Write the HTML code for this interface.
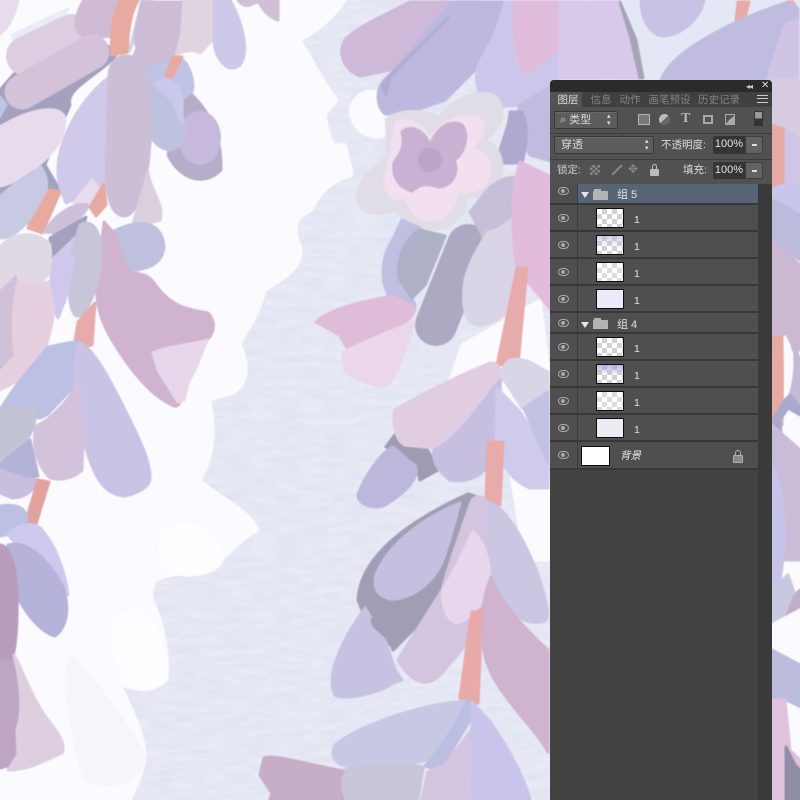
<!DOCTYPE html>
<html><head><meta charset="utf-8">
<style>
*{box-sizing:border-box}
html,body{margin:0;padding:0;width:800px;height:800px;overflow:hidden;background:#e7e9f4}
#art{position:absolute;left:0;top:0}
#art path{fill:currentColor;stroke:currentColor;stroke-width:3;stroke-linejoin:round}
#p{position:absolute;left:550px;top:80px;width:222px;height:720px;background:#424242;border-radius:4px 4px 0 0;overflow:hidden;font-family:"Liberation Sans","Noto Sans CJK SC",sans-serif;color:#d8d8d8;font-size:11px;filter:blur(.35px)}
#p div{position:absolute}
.tab{top:13px;height:14px;line-height:14px;font-size:10.5px;color:#858585;text-align:center;white-space:nowrap}
.tb{background:#5c5c5c;border:1px solid #383838;border-radius:2px;box-shadow:inset 0 1px 0 #6a6a6a}
.inp{background:#353535;color:#e2e2e2;font-size:11px;line-height:17px;text-align:center;border-radius:2px 0 0 2px}
.btn{background:#626262;border:1px solid #3d3d3d;border-radius:0 2px 2px 0}
.btn:after{content:"";position:absolute;left:6px;top:7px;width:5px;height:2px;background:#ddd}
.row{left:0;width:208px;height:27px;background:#4f4f4f;border-bottom:2px solid #383838}
.row .sep{left:27px;top:0;width:1px;height:100%;background:#3b3b3b}
.eye{left:8px;top:9px;width:11px;height:8px;border:1.5px solid #a8a8a8;border-radius:50%/60%}
.eye:after{content:"";position:absolute;left:2px;top:1px;width:4px;height:4px;border-radius:50%;background:#a8a8a8}
.th{left:46px;top:3px;width:28px;height:20px;border:1px solid #0c0c0c;background-color:#fff;background-image:conic-gradient(#d2d2d2 25%,#fff 25% 50%,#d2d2d2 50% 75%,#fff 75%);background-size:10px 10px}
.n{left:84px;top:8px;line-height:14px;color:#e0e0e0;font-size:10.5px}
.tri{left:31px;top:7px;width:0;height:0;border-left:4px solid transparent;border-right:4px solid transparent;border-top:6px solid #e6e6e6}
.fo{left:43px;top:6px;width:15px;height:9px;background:#b4b4b4;border-radius:1px 1px 0 0}
.fo:before{content:"";position:absolute;left:1px;top:-2px;width:7px;height:3px;background:#b4b4b4}
</style></head><body>
<svg id="art" width="800" height="800" viewBox="0 0 800 800">
<defs>
<filter id="tex" x="0" y="0" width="100%" height="100%"><feTurbulence type="fractalNoise" baseFrequency="0.04 0.16" numOctaves="4" seed="4"/><feColorMatrix values="0 0 0 0 .6 0 0 0 0 .64 0 0 0 0 .8 1.2 0 0 0 -.38"/></filter>
<filter id="sb"><feGaussianBlur stdDeviation="0.5"/></filter>
</defs>
<rect width="800" height="800" fill="#e8eaf5"/>
<rect width="800" height="800" filter="url(#tex)" opacity=".45"/>
<g filter="url(#sb)">
<!-- white background blobs -->
<path color="#fbfaff" d="M0 0H345C335 15 320 30 300 40C315 65 325 85 337 100L325 115C330 150 345 165 352 175C335 180 320 190 312 210C300 215 290 225 300 245C305 265 290 275 265 290C258 320 245 330 240 345C255 375 240 395 225 395L210 400C215 430 215 455 200 480C215 495 250 510 258 530C230 545 222 570 190 572C160 578 150 575 152 600C165 625 170 665 166 680C155 690 135 690 120 685C130 705 146 735 145 760C140 780 135 790 130 800H0Z"/>
<path color="#fdfcff" d="M165 530C190 515 220 530 222 560C218 575 185 578 168 572C158 560 158 545 165 530ZM113 625C120 610 145 605 152 620C160 640 170 665 166 680C150 695 130 690 122 680C118 665 110 640 113 625Z"/>
<path color="#f5f5fb" d="M70 655C95 680 125 720 145 755 140 785 110 790 85 780 72 740 65 700 70 655Z"/>
<path color="#fbfaff" d="M350 110C355 90 375 85 385 100L392 130C378 145 352 135 350 110ZM305 145L345 145 352 172 322 190 300 175Z"/>
<path color="#e9ecf6" d="M12 35L68 9 60 22 15 43Z"/>
<path color="#fbfaff" d="M462 345L540 300 550 380 510 470 525 560 550 560V480L430 440Z"/>
<path color="#fbfaff" d="M772 220L800 220V800H772Z"/>
<!-- LEFT CLUSTER -->
<path color="#e8dcec" d="M0 0H18C15 15 8 28 0 34Z"/>
<path color="#a3a1bd" d="M0 90L14 74 108 46 116 55C100 75 65 88 70 105 60 130 50 150 45 165L60 190 35 230 0 195Z"/>
<line x1="26" y1="56" x2="72" y2="34" stroke="#dccde0" stroke-width="40" stroke-linecap="round"/>
<path color="#cfbcd4" d="M84 0H128L122 36 92 37C82 37 76 32 76 26 76 15 80 6 84 0Z"/>
<path color="#bfc4e6" d="M0 97L6 105 0 116Z"/>
<line x1="22" y1="92" x2="92" y2="52" stroke="#d3c2d8" stroke-width="35" stroke-linecap="round"/>
<path color="#e7aaa0" d="M120 0H138C130 15 127 35 128 52L112 55C110 35 113 15 120 0Z"/>
<path color="#c9d4e6" d="M142 0H152L138 30 130 50Z"/>
<path color="#bfc3e4" d="M145 30L175 55C188 60 193 75 193 88 190 100 182 107 178 110L150 120 132 60Z"/>
<path color="#b7adc9" d="M192 95C208 110 222 135 221 170 205 187 180 180 168 155L176 108Z"/>
<ellipse cx="200" cy="138" rx="21" ry="27" fill="#c7b9db"/>
<ellipse cx="163" cy="118" rx="21" ry="34" fill="#bfc2de" transform="rotate(-18 163 118)"/>
<path color="#c9c9ec" d="M155 85C165 75 178 80 182 100V122L172 100Z"/>
<path color="#e7aaa0" d="M172 58L182 57 172 77 166 76Z"/>
<path color="#cdbcd5" d="M142 2H182L181 45C170 55 160 65 152 65 140 62 134 50 136 30Z"/>
<path color="#e0d4e0" d="M184 0H218C226 15 224 30 214 38L200 53C192 48 182 52 177 54L182 30Z"/>
<path color="#cdc8e8" d="M214 0H230C246 30 248 55 240 65 226 76 214 55 214 40Z"/>
<path color="#d0bfd6" d="M238 0H262L250 5C245 7 240 3 238 0ZM258 0H278V20C270 18 262 10 258 0Z"/>
<path color="#e8dbee" d="M0 127C25 112 58 102 65 118 65 145 45 160 30 172 15 182 5 185 0 186Z"/>
<path color="#d0c9ea" d="M109 77V180L88 193 66 203C56 180 56 165 62 145 72 115 90 92 109 77Z"/>
<path color="#e8dcee" d="M74 203L92 180 104 196 85 210Z"/>
<path color="#c8c9e3" d="M0 197C15 182 33 172 41 167 49 180 50 195 35 215 15 235 10 238 0 238Z"/>
<path color="#e7aaa0" d="M50 190L60 192 42 233 28 228Z"/>
<path color="#cfbfd8" d="M45 232C55 212 78 202 87 205 90 212 68 226 55 233Z"/>
<path color="#e7aaa0" d="M90 207L104 184 106 205 96 216Z"/>
<path color="#cbbfd8" d="M109 75C110 52 135 50 145 68 152 95 152 130 148 165 142 195 135 215 125 216 110 216 105 195 107 150Z"/>
<path color="#dacfdd" d="M148 172C150 190 165 205 160 220 145 224 135 226 133 224Z"/>
<path color="#a3a1bd" d="M50 238L86 217 78 250 52 258Z"/>
<path color="#d0c9ea" d="M52 260L78 235 80 270 50 295Z"/>
<path color="#bfc0de" d="M112 232C135 220 160 218 164 245 164 262 150 270 130 270Z"/>
<path color="#cfb3cf" d="M104 222L115 234C122 255 125 268 130 272 150 275 150 278 158 288 175 310 195 310 208 313 216 322 215 332 207 340 195 345 170 350 150 352L180 402C178 407 174 407 172 405 150 395 130 370 112 340 100 320 95 300 97 280Z"/>
<path color="#e8d6ea" d="M153 353C170 345 195 345 207 340L195 370 188 383 184 400 178 402 158 370Z"/>
<path color="#c8c4da" d="M80 225C95 217 104 235 100 270 95 295 85 318 76 316 68 310 68 280 70 260Z"/>
<path color="#cfc8ec" d="M52 265C55 257 65 257 74 257L65 300 58 318 50 300Z"/>
<path color="#e0d8e2" d="M0 247C15 230 40 232 50 245 52 270 50 283 30 283L10 298 0 298Z"/>
<path color="#e6cfde" d="M18 282C30 285 40 285 48 282L54 310C50 340 40 370 28 375L0 390V340Z"/>
<path color="#cfc2d8" d="M0 292L16 277C8 310 10 340 12 355L0 368Z"/>
<path color="#e7abab" d="M78 322L95 303 92 345 74 348Z"/>
<path color="#bcc0e2" d="M0 410C15 385 25 375 48 347 60 345 75 340 80 343L80 380 48 414 40 418Z"/>
<path color="#c9c4e6" d="M80 343C95 350 110 380 125 410 140 440 150 460 150 478 150 488 135 494 125 496 105 495 95 480 85 445 75 410 70 370 80 343Z"/>
<path color="#d3c2dc" d="M78 382L83 440 82 470C75 478 60 481 50 478 40 468 31 450 36 426 50 420 70 400 78 382Z"/>
<path color="#c3c3d6" d="M0 412C15 405 30 405 35 410 37 430 25 445 10 455L0 460Z"/>
<path color="#b3b3d5" d="M0 464L30 440 38 476 20 479 0 468Z"/>
<path color="#c8bedd" d="M0 470L25 478 37 480C35 490 25 498 12 498L0 493Z"/>
<path color="#e2a39e" d="M38 480L49 482 36 524 25 524Z"/>
<!-- lower left -->
<path color="#bcc0e2" d="M0 506C12 504 25 505 27 518 25 528 18 533 0 536Z"/>
<path color="#cfc8ee" d="M8 535C15 525 35 520 42 530 55 545 65 570 68 595L50 580Z"/>
<path color="#b5b3da" d="M8 545C25 540 45 555 62 585 72 610 65 630 55 636 40 632 22 610 15 590Z"/>
<path color="#ba9dbd" d="M0 545C8 545 15 560 17 590 18 630 15 650 12 660L0 660Z"/>
<path color="#bea5c6" d="M0 662H14C25 690 22 720 17 730 19 750 20 755 12 765L0 768Z"/>
<path color="#ddcfe0" d="M14 655C25 675 30 695 48 720 60 735 66 745 62 753 45 760 30 770 8 770L18 755 17 730C24 710 20 680 14 655Z"/>
<!-- CENTER TOP CLUSTER -->
<path color="#cfb9d9" d="M410 2H452L440 40 390 70 360 76C345 70 337 55 345 40 355 28 385 15 410 2Z"/>
<path color="#bcb8de" d="M452 2H508L490 55 445 100 405 114 385 114C375 105 375 85 390 75Z"/>
<path color="#b0acd2" d="M382 85L448 18 390 76 386 95Z"/>
<path color="#cbc7ea" d="M505 2H558V80L520 105 490 107C478 100 474 80 478 65 490 45 500 25 505 2Z"/>
<path color="#e0bcdc" d="M514 2H558V50L534 70 522 72C515 45 512 20 514 2Z"/>
<path color="#c0bce0" d="M520 105L558 82V163L530 155C520 140 515 120 520 105Z"/>
<path color="#aea9cd" d="M510 112L522 112C530 130 525 150 522 163L497 163C500 145 510 125 510 112Z"/>
<!-- flower -->
<path color="#e0dde6" d="M385 120C400 108 428 110 440 118 450 100 480 88 495 96 510 112 497 132 485 141 500 145 505 165 500 180 490 195 472 197 465 198 468 215 450 230 430 229 412 228 400 215 395 210 375 218 355 212 357 195 360 175 378 165 386 158 382 135 385 120Z"/>
<path color="#f2e0f0" d="M397 122C410 117 424 126 430 138 440 122 465 112 480 119 488 130 476 145 470 150 488 150 495 168 485 184 475 194 465 192 455 191 460 208 440 223 425 220 412 215 410 205 405 196 395 203 382 195 386 176 392 157 392 135 397 122Z"/>
<path color="#c8b1d2" d="M402 132C410 124 425 130 430 146 436 128 450 119 462 125 470 135 464 155 454 160 460 175 450 187 438 187 425 183 420 184 412 191 400 188 392 178 394 163 398 155 406 150 402 132Z"/>
<ellipse cx="430" cy="160" rx="12" ry="12" fill="#bda4c5"/>
<!-- below flower -->
<path color="#bfbfe2" d="M402 220L420 228 400 270 415 305 414 310 395 304C380 290 380 260 390 245Z"/>
<path color="#aeb0c8" d="M420 230L445 236 425 285 412 298 400 280C395 265 402 240 420 230Z"/>
<line x1="468" y1="245" x2="436" y2="325" stroke="#aea9c2" stroke-width="42" stroke-linecap="round"/>
<path color="#c7bfd9" d="M470 212C480 200 485 192 490 187 505 177 523 167 521 200 520 225 500 240 485 240Z"/>
<path color="#d9d4e6" d="M488 232C510 228 530 205 522 182L550 180 535 240 515 300C505 320 480 330 470 322 462 310 463 295 465 280 470 260 480 245 488 232Z"/>
<path color="#e2bcdc" d="M520 162L558 180V318L518 270C510 235 512 190 520 162Z"/>
<path color="#e7abab" d="M517 268L527 268 518 365 497 365Z"/>
<!-- pink flower leaves -->
<path color="#dfbdd8" d="M316 322C330 308 370 300 392 296L415 308C412 322 400 325 385 330L358 350C350 353 345 348 340 335Z"/>
<path color="#ead8ea" d="M343 353C355 345 395 330 414 322 410 335 402 365 388 385 378 390 355 378 345 372Z"/>
<!-- mid leaves -->
<path color="#9e9bb3" d="M400 428C410 430 415 440 425 445L438 470 420 480 416 465 400 450 386 447Z"/>
<path color="#bcb8dc" d="M358 495C365 475 380 455 392 447 400 450 405 460 415 465 420 475 410 490 385 505 375 510 358 505 358 495Z"/>
<path color="#e0cde2" d="M395 410C420 395 460 375 490 363 500 362 502 375 502 380L465 445 435 448 405 445C395 440 392 420 395 410Z"/>
<path color="#c7bfe0" d="M434 450C455 442 480 405 500 380L501 420 485 470C475 480 460 482 450 480 437 470 432 460 434 450Z"/>
<path color="#cfcbeb" d="M497 388L520 412 548 455V488L530 488C510 480 496 460 496 430Z"/>
<path color="#d9d4e6" d="M501 375C505 357 515 357 530 362L548 372V390L522 408Z"/>
<path color="#c2c2e2" d="M524 408L548 392V463Z"/>
<path color="#e7abab" d="M488 442L503 442 500 505 486 500Z"/>
<!-- large leaf -->
<path color="#a09db5" d="M358 600C360 560 400 525 468 494L475 496 440 600 395 648 370 630Z"/>
<path color="#c5c0df" d="M376 575C390 540 430 515 460 503 455 520 445 560 438 570 425 590 405 600 390 599 378 595 373 590 376 575Z"/>
<path color="#c6c2e2" d="M365 608L385 640 395 670 402 680 395 682C375 695 345 700 335 695 327 680 335 650 365 608Z"/>
<path color="#a09db5" d="M372 620C390 605 420 598 430 587L447 567 425 618 393 650C388 632 372 630 372 620Z"/>
<path color="#d3c4e0" d="M442 590C450 560 465 520 472 500 480 492 490 498 490 520L500 580 470 640 440 675C425 690 410 680 398 660Z"/>
<path color="#e8a9a9" d="M472 610L482 610 478 703 460 698Z"/>
<path color="#cbc7e2" d="M487 502C505 505 525 540 540 580 548 610 552 622 540 622 520 625 497 605 492 570 488 540 484 512 487 502Z"/>
<path color="#e8d6ec" d="M473 532C480 537 490 555 490 580 488 600 470 620 457 623 447 620 441 605 443 590 455 570 465 548 473 532Z"/>
<path color="#cfb3cf" d="M491 577C500 600 520 625 548 650V752C530 720 490 690 484 650 480 620 482 600 491 577Z"/>
<path color="#e8a9a9" d="M472 612L481 612 478 703 460 698Z"/>
<!-- bottom -->
<path color="#c6c8e4" d="M335 745C360 725 420 704 468 701L440 750C430 765 400 765 365 765 340 770 328 760 335 745Z"/>
<path color="#bcbee2" d="M468 700L473 715 440 770 425 766C440 750 458 722 468 700Z"/>
<path color="#c9c5ea" d="M472 702L490 722C510 750 525 780 530 800H468L472 750Z"/>
<path color="#d3c4e0" d="M470 732L468 800H422L428 772 445 765Z"/>
<path color="#c8c6d8" d="M345 770C360 764 410 764 423 767L418 800H345C341 790 339 775 345 770Z"/>
<path color="#c7aec8" d="M264 758C275 754 310 765 343 771 338 780 340 790 343 800H270L272 793 260 775Z"/>
<!-- TOP RIGHT -->
<path color="#e4e8f5" d="M620 0H800V80H642Z"/>
<path color="#c8c3e4" d="M641 0H704C700 20 680 36 662 36 650 34 641 20 641 0Z"/>
<path color="#d8c8ea" d="M560 78V2H618L632 35 640 78Z"/>
<path color="#a8a4b8" d="M620 2L636 40 643 78 640 78 630 35Z"/>
<path color="#e7aaa5" d="M738 2H749L745 18 736 20ZM787 2H793L798 10H789Z"/>
<path color="#bfbce0" d="M661 80C670 55 720 25 785 3 798 5 798 8 798 15V80Z"/>
<path color="#cfc4e4" d="M767 80L785 25 798 20V80Z"/>
<!-- RIGHT EDGE -->
<path color="#d7cbe2" d="M772 80H800V140L772 130Z"/>
<path color="#e7aaa5" d="M772 125L786 130 786 185 772 190Z"/>
<path color="#cfc5e4" d="M786 130L800 140V190H786Z"/>
<path color="#c8c6ea" d="M772 190C785 182 795 185 800 190V240H772Z"/>
<path color="#bcbbdc" d="M772 200L800 215V260L772 240Z"/>
<path color="#cbb9d3" d="M772 240L800 265V350H772Z"/>
<path color="#e7aaa5" d="M773 337H783L782 425H773Z"/>
<path color="#fbfaff" d="M785 337C795 355 795 380 790 395L798 405V423L786 410Z"/>
<path color="#c5bad5" d="M792 340L800 360V405L790 395C795 380 797 355 792 340Z"/>
<path color="#a9a9ce" d="M785 400L790 395 800 407V415L788 408 780 420 782 445 800 450 773 430 773 420Z"/>
<path color="#c9bcd8" d="M772 425L800 450V560H772Z"/>
<path color="#c8c3e8" d="M772 465C785 490 787 540 780 580L772 590Z"/>
<path color="#c8c9e0" d="M772 590L788 575 795 595 785 620 772 625Z"/>
<path color="#c2aecb" d="M795 595L800 590V625L785 620Z"/>
<path color="#fbfaff" d="M772 625L800 610V665L772 650Z"/>
<path color="#bcbcdc" d="M772 650L800 665V720H772Z"/>
<path color="#fbfaff" d="M780 700L800 710V760L785 745Z"/>
<path color="#dfc3de" d="M772 700H785L790 750 800 760V800H772Z"/>
<path color="#8f8da5" d="M786 747L795 765 800 770V800H786Z"/>
</g>
</svg>
<div id="p">
<div style="left:0;top:0;width:222px;height:12px;background:#2b2b2b"></div>
<div style="left:196px;top:2px;font-size:8px;color:#ccc;letter-spacing:-1px">◂◂</div>
<div style="left:211px;top:0;font-size:10px;color:#ddd;line-height:12px">✕</div>
<div style="left:0;top:12px;width:222px;height:15px;background:#404040"></div>
<div style="left:0;top:12px;width:32px;height:15px;background:#535353"></div>
<div class="tab" style="left:7px;width:22px;color:#dedede">图层</div>
<div class="tab" style="left:40px;width:22px">信息</div>
<div class="tab" style="left:69px;width:22px">动作</div>
<div class="tab" style="left:98px;width:43px">画笔预设</div>
<div class="tab" style="left:148px;width:38px">历史记录</div>
<div style="left:207px;top:15px;width:11px;height:8px;border-top:1px solid #ccc;border-bottom:1px solid #ccc"></div>
<div style="left:207px;top:18px;width:11px;height:1px;background:#ccc"></div>
<!-- toolbar -->
<div style="left:0;top:27px;width:222px;height:27px;background:#515151;border-bottom:1px solid #3b3b3b"></div>
<div class="tb" style="left:4px;top:31px;width:64px;height:18px"></div>
<div style="left:10px;top:33px;font-size:11px;line-height:14px;color:#ddd">⌕ 类型</div>
<div style="left:57px;top:33px;font-size:7px;line-height:7px;color:#ddd">▴<br>▾</div>
<div style="left:88px;top:34px;width:12px;height:11px;border:1px solid #b5b5b5;background:#777"></div>
<div style="left:109px;top:34px;width:11px;height:11px;border-radius:50%;background:linear-gradient(135deg,#bbb 50%,#666 50%)"></div>
<div style="left:131px;top:31px;font-family:'Liberation Serif',serif;font-size:14px;font-weight:bold;line-height:16px;color:#b8b8b8">T</div>
<div style="left:153px;top:35px;width:10px;height:9px;border:2px solid #a8a8a8"></div>
<div style="left:175px;top:34px;width:10px;height:11px;border:1px solid #aaa;background:linear-gradient(135deg,#555 50%,#aaa 50%)"></div>
<div style="left:204px;top:31px;width:9px;height:15px;background:linear-gradient(#9a9a9a 50%,#333 50%);border:1px solid #333"></div>
<!-- blend -->
<div style="left:0;top:54px;width:222px;height:26px;background:#515151;border-bottom:1px solid #3b3b3b"></div>
<div class="tb" style="left:4px;top:56px;width:100px;height:18px"></div>
<div style="left:11px;top:58px;line-height:14px;color:#dcdcdc;font-size:11px">穿透</div>
<div style="left:95px;top:58px;font-size:7px;line-height:7px;color:#ddd">▴<br>▾</div>
<div style="left:111px;top:58px;line-height:14px;color:#dcdcdc;font-size:10.5px;white-space:nowrap">不透明度:</div>
<div class="inp" style="left:163px;top:56px;width:32px;height:18px">100%</div>
<div class="btn" style="left:195px;top:56px;width:18px;height:18px"></div>
<!-- lock -->
<div style="left:0;top:80px;width:222px;height:24px;background:#515151"></div>
<div style="left:7px;top:83px;line-height:14px;color:#cfcfcf;font-size:10.5px;white-space:nowrap">锁定:</div>
<div style="left:40px;top:85px;width:10px;height:10px;background:conic-gradient(#888 25%,#555 25% 50%,#888 50% 75%,#555 75%);background-size:5px 5px"></div>
<div style="left:60px;top:85px;width:14px;height:2px;background:#888;transform:rotate(-45deg);margin-top:4px"></div>
<div style="left:78px;top:82px;font-size:12px;line-height:14px;color:#888">✥</div>
<div style="left:100px;top:89px;width:9px;height:7px;background:#bbb;border-radius:1px"></div>
<div style="left:102px;top:84px;width:5px;height:6px;border:1.5px solid #bbb;border-bottom:0;border-radius:3px 3px 0 0"></div>
<div style="left:133px;top:83px;line-height:14px;color:#dcdcdc;font-size:10.5px;white-space:nowrap">填充:</div>
<div class="inp" style="left:163px;top:82px;width:32px;height:17px">100%</div>
<div class="btn" style="left:195px;top:82px;width:18px;height:17px"></div>
<!-- list -->
<div style="left:208px;top:104px;width:14px;height:616px;background:#3a3a3a"></div>
<div class="row" style="top:104px;height:21px;background:#566475"><div class="sep" style="background:#3c4044"></div></div>
<div style="left:0;top:104px;width:27px;height:21px;background:#4f4f4f;border-bottom:2px solid #383838"></div>
<div class="eye" style="top:107px"></div><div class="tri" style="top:112px"></div><div class="fo" style="top:111px"></div>
<div style="left:67px;top:108px;line-height:14px;color:#e4e4e4;font-size:11px">组 5</div>

<div class="row" style="top:125px"><div class="sep"></div><div class="eye"></div><div class="th"></div><div class="n">1</div></div>
<div class="row" style="top:152px"><div class="sep"></div><div class="eye"></div><div class="th" style="background-image:linear-gradient(rgba(190,185,225,.7),rgba(255,255,255,0) 60%),conic-gradient(#d2d2d2 25%,#fff 25% 50%,#d2d2d2 50% 75%,#fff 75%);background-size:100% 100%,10px 10px"></div><div class="n">1</div></div>
<div class="row" style="top:179px"><div class="sep"></div><div class="eye"></div><div class="th" style="background-image:conic-gradient(#dcdcdc 25%,#fff 25% 50%,#dcdcdc 50% 75%,#fff 75%)"></div><div class="n">1</div></div>
<div class="row" style="top:206px"><div class="sep"></div><div class="eye"></div><div class="th" style="background:#eaeaf8"></div><div class="n">1</div></div>

<div class="row" style="top:233px;height:21px"><div class="sep"></div><div class="eye" style="top:6px"></div><div class="tri" style="top:9px"></div><div class="fo" style="top:7px"></div><div style="left:67px;top:5px;line-height:14px;color:#e0e0e0;font-size:11px">组 4</div></div>

<div class="row" style="top:254px"><div class="sep"></div><div class="eye"></div><div class="th"></div><div class="n">1</div></div>
<div class="row" style="top:281px"><div class="sep"></div><div class="eye"></div><div class="th" style="background-image:linear-gradient(rgba(170,165,225,.8),rgba(255,255,255,0) 60%),conic-gradient(#d2d2d2 25%,#fff 25% 50%,#d2d2d2 50% 75%,#fff 75%);background-size:100% 100%,10px 10px"></div><div class="n">1</div></div>
<div class="row" style="top:308px"><div class="sep"></div><div class="eye"></div><div class="th" style="background-image:conic-gradient(#dcdcdc 25%,#fff 25% 50%,#dcdcdc 50% 75%,#fff 75%)"></div><div class="n">1</div></div>
<div class="row" style="top:335px"><div class="sep"></div><div class="eye"></div><div class="th" style="background:#ecedf4"></div><div class="n">1</div></div>
<div class="row" style="top:362px;height:28px"><div class="sep"></div><div class="eye"></div><div class="th" style="left:31px;top:4px;width:29px;background:#fff"></div><div style="left:70px;top:7px;line-height:14px;font-style:italic;color:#e4e4e4;font-size:10.5px">背景</div>
<div style="left:183px;top:13px;width:10px;height:8px;background:#8a8a8a;border:1px solid #b0b0b0;border-radius:1px"></div><div style="left:185px;top:8px;width:6px;height:6px;border:1.5px solid #b0b0b0;border-bottom:0;border-radius:3px 3px 0 0"></div></div>
</div>
</body></html>
